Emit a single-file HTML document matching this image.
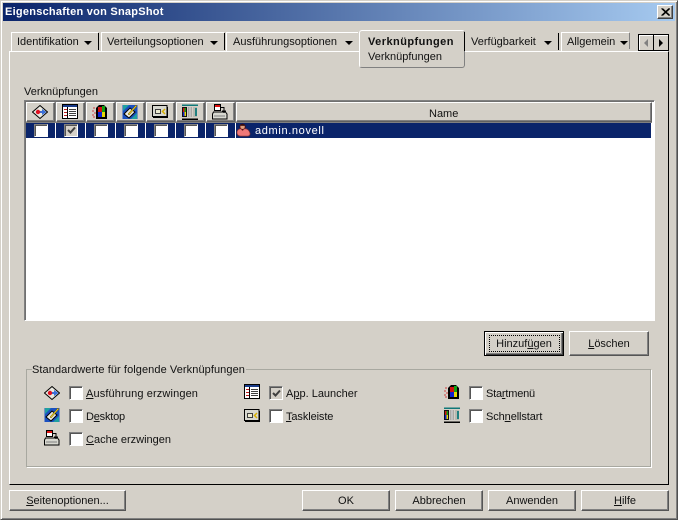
<!DOCTYPE html>
<html><head><meta charset="utf-8">
<style>
html,body{margin:0;padding:0}
body{width:678px;height:520px;overflow:hidden;position:relative;background:#d4d0c8;font:11px "Liberation Sans",sans-serif;color:#000}
.a,.t,.b,.cb,.h,.i{position:absolute;box-sizing:border-box}
.t{white-space:nowrap;line-height:13px;color:#111}
u{text-decoration:underline}
.b{background:#d4d0c8;border:1px solid;border-color:#fff #555 #555 #fff;box-shadow:inset -1px -1px 0 #808080;text-align:center;color:#111}
.cb{width:14px;height:14px;background:#fff;border:1px solid;border-color:#808080 #fff #fff #808080;box-shadow:inset 1px 1px 0 #555}
.r{height:13px}
.h{top:102px;height:20px;background:#d4d0c8;border:1px solid;border-color:#fff #606060 #606060 #fff;box-shadow:inset -1px -1px 0 #808080}
.arr{position:absolute;width:0;height:0;border:4px solid transparent;border-top:4px solid #000;border-bottom:0}
.sep{position:absolute;width:1px;background:#000;top:33px;height:17px}
.i{width:16px;height:16px}
</style></head><body>
<svg width="0" height="0" style="position:absolute">
<symbol id="i1" viewBox="0 0 16 16"><path d="M8 1.500L15.500 8 8 14.500 0.500 8Z" fill="#e8e8e0" stroke="#000"/><path d="M4 8h8" stroke="#3a6fd8" stroke-width="2"/><path d="M10 5l4.500 3-4.500 3z" fill="#3a6fd8"/><circle cx="6" cy="8" r="2.200" fill="#e01020"/></symbol>
<symbol id="i2" viewBox="0 0 16 16"><rect x="0.500" y="0.500" width="15" height="14" fill="#fff" stroke="#000"/><rect x="1" y="1" width="14" height="2" fill="#1a3c8a"/><path d="M2 5.500h3M2 8.500h3M2 11.500h3" stroke="#c02020"/><path d="M7 5.500h7M7 7.500h7M7 9.500h7M7 11.500h7" stroke="#404040"/><path d="M5.500 3v11" stroke="#000"/></symbol>
<symbol id="i3" viewBox="0 0 16 16"><path d="M4 4l3-3h5l3 3v11H4z" fill="#000"/><rect x="6" y="3" width="4" height="5" fill="#d01010"/><rect x="10" y="2" width="3" height="6" fill="#10a010"/><rect x="6" y="8" width="4" height="5" fill="#1020d0"/><rect x="10" y="8" width="3" height="5" fill="#e8d800"/><path d="M1 4h2M0 7h2M2 9h2M0 11h2M1 13h2" stroke="#d04040"/></symbol>
<symbol id="i4" viewBox="0 0 16 16"><rect x="0.500" y="1" width="15" height="14" fill="#1a50c0"/><path d="M1 1h6L1 7zM15 15H9l6-6z" fill="#20a0a0"/><path d="M2 10l6-6 5 4-6 6z" fill="#e8e8e0" stroke="#000"/><path d="M6 10l8-9 1 1-8 9z" fill="#e8d020" stroke="#604000" stroke-width=".5"/></symbol>
<symbol id="i5" viewBox="0 0 16 16"><rect x="0.500" y="1.500" width="14.500" height="11" fill="#d8d8d0" stroke="#000"/><rect x="1" y="12" width="15" height="2" fill="#000"/><rect x="15" y="3" width="1" height="10" fill="#000"/><rect x="3.500" y="5.500" width="5" height="4" fill="#ecead0" stroke="#404040"/><path d="M13 5l-2.500 2.500 2.500 2.500" fill="none" stroke="#d8b000" stroke-width="1.500"/></symbol>
<symbol id="i6" viewBox="0 0 16 16"><rect x="0" y="0.500" width="16" height="1.500" fill="#107878"/><rect x="0" y="14.500" width="16" height="1.500" fill="#000"/><rect x="0" y="3" width="5" height="10" fill="#101010"/><rect x="1" y="4" width="1.500" height="4" fill="#d01010"/><rect x="2.500" y="4" width="1.500" height="4" fill="#10a010"/><rect x="1" y="8" width="1.500" height="4" fill="#1020d0"/><rect x="2.500" y="8" width="1.500" height="4" fill="#e8d800"/><path d="M7 3v10M9 3v10" stroke="#808080"/><path d="M8 3v10" stroke="#fff"/><rect x="11" y="3" width="4" height="10" fill="#b8b8b0"/><rect x="13" y="4" width="2" height="8" fill="#208080"/></symbol>
<symbol id="i7" viewBox="0 0 16 16"><rect x="2.500" y="0.500" width="6" height="6" fill="#fff" stroke="#000"/><rect x="3" y="1" width="5" height="2" fill="#e01010"/><path d="M1.500 8h12l1.500 2v5H0.500v-5z" fill="#d8d8d0" stroke="#000"/><path d="M2 12h11" stroke="#808080"/><path d="M9 3.500h3v5M10 7h4M12 5v4" stroke="#000" fill="none"/></symbol>
<symbol id="u" viewBox="0 0 16 16"><circle cx="7" cy="4" r="2.800" fill="#e0a080" stroke="#500" stroke-width=".8"/><path d="M5 1.500h4v1.500h-4z" fill="#301010"/><path d="M1 10c0-3 3-4 4-4l2 2 2-2c2 0 5 1 6 5 0 3-2 3-4 3H5c-2 0-4-1-4-4z" fill="#f07878" stroke="#803030" stroke-width=".7"/></symbol>
</svg>

<!-- window frame -->
<div class="a" style="left:0;top:0;width:678px;height:520px;border:1px solid;border-color:#d4d0c8 #505050 #505050 #d4d0c8;box-shadow:inset 1px 1px 0 #fff,inset -1px -1px 0 #808080"></div>
<div class="a" style="left:3px;top:3px;width:672px;height:18px;background:linear-gradient(90deg,#0a246a,#a6caf0)"></div>
<div class="t" style="left:5px;top:6px;color:#fff;font-weight:bold;font-size:11px;letter-spacing:.25px">Eigenschaften von SnapShot</div>
<div class="a" style="left:657px;top:5px;width:16px;height:14px;background:#d4d0c8;border:1px solid;border-color:#fff #404040 #404040 #fff;box-shadow:inset -1px -1px 0 #808080">
<svg class="a" style="left:3px;top:2px" width="9" height="8"><path d="M0.500 0.500L8 7.500M1.500 0.500L9 7.500M8 0.500L0.500 7.500M9 0.500L1.500 7.500" stroke="#000"/></svg></div>

<!-- page -->
<div class="a" style="left:9px;top:51px;width:660px;height:434px;border:1px solid;border-color:#fff #000 #000 #fff"></div>

<!-- tabs -->
<div class="a" style="left:11px;top:32px;width:87px;height:19px;border-top:1px solid #fff;border-left:1px solid #fff"></div>
<div class="t" style="left:17px;top:36px">Identifikation</div><div class="arr" style="left:84px;top:41px"></div>
<div class="sep" style="left:98px"></div>
<div class="a" style="left:101px;top:32px;width:123px;height:19px;border-top:1px solid #fff;border-left:1px solid #fff"></div>
<div class="t" style="left:107px;top:36px">Verteilungsoptionen</div><div class="arr" style="left:210px;top:41px"></div>
<div class="sep" style="left:224px"></div>
<div class="a" style="left:226px;top:32px;width:132px;height:19px;border-top:1px solid #fff;border-left:1px solid #fff"></div>
<div class="t" style="left:233px;top:36px">Ausführungsoptionen</div><div class="arr" style="left:345px;top:41px"></div>

<div class="a" style="left:359px;top:30px;width:106px;height:38px;background:#d4d0c8;border:1px solid;border-color:#fff #808080 #808080 #fff;border-radius:3px"></div>
<div class="sep" style="left:464px;top:32px;height:19px"></div>
<div class="t" style="left:368px;top:36px;font-weight:bold;font-size:11px;letter-spacing:.45px">Verknüpfungen</div>
<div class="t" style="left:368px;top:51px">Verknüpfungen</div>

<div class="t" style="left:471px;top:36px">Verfügbarkeit</div><div class="arr" style="left:544px;top:41px"></div>
<div class="sep" style="left:558px"></div>
<div class="a" style="left:561px;top:32px;width:68px;height:1px;background:#fff"></div>
<div class="a" style="left:561px;top:32px;width:1px;height:19px;background:#fff"></div>
<div class="t" style="left:567px;top:36px">Allgemein</div><div class="arr" style="left:620px;top:41px"></div>
<div class="a" style="left:628px;top:33px;width:2px;height:16px;border-right:1px solid #808080"></div>

<div class="a" style="left:638px;top:34px;width:31px;height:17px;border:1px solid #000;background:#d4d0c8;box-shadow:inset 1px 1px 0 #fff"></div>
<div class="a" style="left:653px;top:34px;width:1px;height:17px;background:#000"></div>
<div class="a" style="left:644px;top:39px;width:0;height:0;border:4px solid transparent;border-right:4px solid #808080;border-left:0"></div>
<div class="a" style="left:659px;top:39px;width:0;height:0;border:4px solid transparent;border-left:4px solid #000;border-right:0"></div>

<!-- list -->
<div class="t" style="left:24px;top:86px">Verknüpfungen</div>
<div class="a" style="left:24px;top:100px;width:631px;height:221px;background:#fff;border:1px solid;border-color:#808080 #fff #fff #808080;box-shadow:inset 1px 1px 0 #707070"></div>
<div class="a" style="left:26px;top:102px;width:626px;height:21px;background:#808080"></div>
<div class="h" style="left:26px;width:29px"></div>
<div class="h" style="left:56px;width:29px"></div>
<div class="h" style="left:86px;width:29px"></div>
<div class="h" style="left:116px;width:29px"></div>
<div class="h" style="left:146px;width:29px"></div>
<div class="h" style="left:176px;width:29px"></div>
<div class="h" style="left:206px;width:29px"></div>
<div class="h" style="left:236px;width:416px"></div>
<div class="t" style="left:429px;top:108px">Name</div>
<svg class="i" style="left:32px;top:104px"><use href="#i1"/></svg>
<svg class="i" style="left:62px;top:104px"><use href="#i2"/></svg>
<svg class="i" style="left:92px;top:104px"><use href="#i3"/></svg>
<svg class="i" style="left:122px;top:104px"><use href="#i4"/></svg>
<svg class="i" style="left:152px;top:104px"><use href="#i5"/></svg>
<svg class="i" style="left:182px;top:104px"><use href="#i6"/></svg>
<svg class="i" style="left:212px;top:104px"><use href="#i7"/></svg>

<div class="a" style="left:26px;top:123px;width:625px;height:15px;background:#0a246a"></div>
<div class="a" style="left:55px;top:123px;width:1px;height:15px;background:#fff"></div>
<div class="a" style="left:85px;top:123px;width:1px;height:15px;background:#fff"></div>
<div class="a" style="left:115px;top:123px;width:1px;height:15px;background:#fff"></div>
<div class="a" style="left:145px;top:123px;width:1px;height:15px;background:#fff"></div>
<div class="a" style="left:175px;top:123px;width:1px;height:15px;background:#fff"></div>
<div class="a" style="left:205px;top:123px;width:1px;height:15px;background:#fff"></div>
<div class="a" style="left:235px;top:123px;width:1px;height:15px;background:#fff"></div>
<div class="cb r" style="left:34px;top:124px"></div>
<div class="cb r" style="left:64px;top:124px;background:#d4d0c8"><svg class="a" style="left:2px;top:1px" width="9" height="9"><path d="M1 4l2.500 2.500L8 1.500" fill="none" stroke="#404040" stroke-width="2"/></svg></div>
<div class="cb r" style="left:94px;top:124px"></div>
<div class="cb r" style="left:124px;top:124px"></div>
<div class="cb r" style="left:154px;top:124px"></div>
<div class="cb r" style="left:184px;top:124px"></div>
<div class="cb r" style="left:214px;top:124px"></div>
<svg class="i" style="left:236px;top:123px;width:15px;height:15px"><use href="#u"/></svg>
<div class="t" style="left:255px;top:125px;color:#fff;letter-spacing:.65px">admin.novell</div>

<!-- buttons -->
<div class="b" style="left:484px;top:331px;width:80px;height:25px;border:1px solid #000;box-shadow:inset 1px 1px 0 #fff,inset -1px -1px 0 #404040,inset -2px -2px 0 #808080;line-height:25px">Hinzuf<u>ü</u>gen</div>
<div class="a" style="left:489px;top:335px;width:71px;height:17px;border:1px dotted #000"></div>
<div class="b" style="left:569px;top:331px;width:80px;height:25px;line-height:25px"><u>L</u>öschen</div>

<!-- group -->
<div class="a" style="left:26px;top:369px;width:625px;height:98px;border:1px solid #a8a8a0;box-shadow:1px 1px 0 #fff"></div>
<div class="t" style="left:32px;top:364px;background:#d4d0c8;padding-right:1px;letter-spacing:.08px">Standardwerte für folgende Verknüpfungen</div>

<svg class="i" style="left:44px;top:385px"><use href="#i1"/></svg>
<svg class="i" style="left:44px;top:407px"><use href="#i4"/></svg>
<svg class="i" style="left:44px;top:430px"><use href="#i7"/></svg>
<svg class="i" style="left:244px;top:384px"><use href="#i2"/></svg>
<svg class="i" style="left:244px;top:408px"><use href="#i5"/></svg>
<svg class="i" style="left:444px;top:384px"><use href="#i3"/></svg>
<svg class="i" style="left:444px;top:407px"><use href="#i6"/></svg>

<div class="cb" style="left:69px;top:386px"></div><div class="t" style="left:86px;top:388px;letter-spacing:.13px"><u>A</u>usführung erzwingen</div>
<div class="cb" style="left:69px;top:409px"></div><div class="t" style="left:86px;top:411px;letter-spacing:-.2px">D<u>e</u>sktop</div>
<div class="cb" style="left:69px;top:432px"></div><div class="t" style="left:86px;top:434px"><u>C</u>ache erzwingen</div>
<div class="cb" style="left:269px;top:386px;background:#d4d0c8"><svg class="a" style="left:2px;top:2px" width="9" height="9"><path d="M1 4l2.500 2.500L8 1.500" fill="none" stroke="#404040" stroke-width="2"/></svg></div><div class="t" style="left:286px;top:388px">A<u>p</u>p. Launcher</div>
<div class="cb" style="left:269px;top:409px"></div><div class="t" style="left:286px;top:411px;letter-spacing:-.1px"><u>T</u>askleiste</div>
<div class="cb" style="left:469px;top:386px"></div><div class="t" style="left:486px;top:388px;letter-spacing:-.2px">Sta<u>r</u>tmenü</div>
<div class="cb" style="left:469px;top:409px"></div><div class="t" style="left:486px;top:411px;letter-spacing:-.1px">Sch<u>n</u>ellstart</div>

<!-- bottom -->
<div class="b" style="left:9px;top:490px;width:117px;height:21px;line-height:21px"><u>S</u>eitenoptionen...</div>
<div class="b" style="left:302px;top:490px;width:88px;height:21px;line-height:21px">OK</div>
<div class="b" style="left:395px;top:490px;width:88px;height:21px;line-height:21px">Abbrechen</div>
<div class="b" style="left:488px;top:490px;width:88px;height:21px;line-height:21px">Anwenden</div>
<div class="b" style="left:581px;top:490px;width:88px;height:21px;line-height:21px"><u>H</u>ilfe</div>
</body></html>
